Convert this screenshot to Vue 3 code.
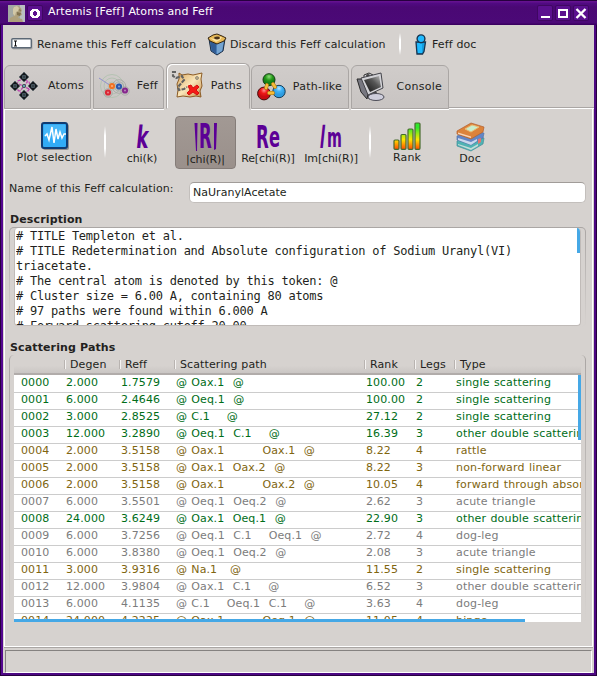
<script setup>
const columns = ['', 'Degen', 'Reff', 'Scattering path', 'Rank', 'Legs', 'Type']

const rows = [
  ['strong', '0000', '2.000', '1.7579', '@ Oax.1  @', '100.00', '2', 'single scattering'],
  ['strong', '0001', '6.000', '2.4646', '@ Oeq.1  @', '100.00', '2', 'single scattering'],
  ['strong', '0002', '3.000', '2.8525', '@ C.1    @', '27.12', '2', 'single scattering'],
  ['strong', '0003', '12.000', '3.2890', '@ Oeq.1  C.1    @', '16.39', '3', 'other double scattering'],
  ['medium', '0004', '2.000', '3.5158', '@ Oax.1         Oax.1  @', '8.22', '4', 'rattle'],
  ['medium', '0005', '2.000', '3.5158', '@ Oax.1  Oax.2  @', '8.22', '3', 'non-forward linear'],
  ['medium', '0006', '2.000', '3.5158', '@ Oax.1         Oax.2  @', '10.05', '4', 'forward through absorber'],
  ['weak', '0007', '6.000', '3.5501', '@ Oeq.1  Oeq.2  @', '2.62', '3', 'acute triangle'],
  ['strong', '0008', '24.000', '3.6249', '@ Oax.1  Oeq.1  @', '22.90', '3', 'other double scattering'],
  ['weak', '0009', '6.000', '3.7256', '@ Oeq.1  C.1    Oeq.1  @', '2.72', '4', 'dog-leg'],
  ['weak', '0010', '6.000', '3.8380', '@ Oeq.1  Oeq.2  @', '2.08', '3', 'acute triangle'],
  ['medium', '0011', '3.000', '3.9316', '@ Na.1   @', '11.55', '2', 'single scattering'],
  ['weak', '0012', '12.000', '3.9804', '@ Oax.1  C.1    @', '6.52', '3', 'other double scattering'],
  ['weak', '0013', '6.000', '4.1135', '@ C.1    Oeq.1  C.1    @', '3.63', '4', 'dog-leg'],
  ['medium', '0014', '24.000', '4.2225', '@ Oax.1         Oeq.1  @', '11.05', '4', 'hinge'],
]

const description = `# TITLE Templeton et al.
# TITLE Redetermination and Absolute configuration of Sodium Uranyl(VI)
triacetate.
# The central atom is denoted by this token: @
# Cluster size = 6.00 A, containing 80 atoms
# 97 paths were found within 6.000 A
# Forward scattering cutoff 20.00`
</script>

<template>
  <div class="window">
    <header class="titlebar">
      <svg class="portrait" width="17" height="17" viewBox="0 0 17 17">
        <rect width="17" height="17" fill="#a3a8a3" />
        <rect x="12" width="5" height="17" fill="#b9bfc1" />
        <path d="M6 2l4-1 3 2 1 3-1 1 1 3-3 1-1 2 4 1 1 3H1l1-4 4-2-1-3V4z" fill="#aea07c" />
        <path d="M6 2l3-1 2 2-1 3-2 1-1 4-2-2V4z" fill="#d2c8a7" />
        <path d="M9 7l4 1-1 3-3-1zM11 4l2 1-1 2z" fill="#817250" />
      </svg>
      <span class="wbtn menu">
        <svg width="14" height="14" viewBox="0 0 14 14"><path d="M4 3h6v1h1v1h1v5h-1v1h-1v1H4v-1H3v-1H2V5h1V4h1zM5 6v3h1v1h2V9h1V6H8V5H6v1z" fill="#fff" fill-rule="evenodd" /></svg>
      </span>
      <span class="title">Artemis [Feff] Atoms and Feff</span>
      <div class="controls">
        <span class="wbtn"><svg width="14" height="14" viewBox="0 0 14 14"><path d="M3 10h9v2H3z" fill="#fff" /></svg></span>
        <span class="wbtn"><svg width="14" height="14" viewBox="0 0 14 14"><path d="M2 3h10v9H2zM4 5v5h6V5z" fill="#fff" fill-rule="evenodd" /></svg></span>
        <span class="wbtn"><svg width="14" height="14" viewBox="0 0 14 14"><path d="M2.5 3l9 9M11.500 3l-9 9" stroke="#fff" stroke-width="2.4" /></svg></span>
      </div>
    </header>

    <nav class="toolbar">
      <span class="tool rename">
        <svg width="22" height="12" viewBox="0 0 22 12">
          <rect x="1.5" y="1.5" width="20" height="10" rx="1" fill="#aaa9a8" />
          <rect x=".8" y=".8" width="19.5" height="9" rx="1" fill="#fff" stroke="#5c6875" stroke-width="1.4" />
          <path d="M3 3h3M4.5 3v5M3 8h3" stroke="#111" />
        </svg>
        <span>Rename this Feff calculation</span>
      </span>
      <span class="tool discard">
        <svg width="20" height="22" viewBox="0 0 20 22">
          <path d="M2 6l8 4 8-4-2 12-6 4-6-4z" fill="#497db7" stroke="#1a2c43" />
          <path d="M3 8l6 3v10l-4-3z" fill="#315c94" />
          <path d="M10 11l7-4-2 11-5 3z" fill="#75a5d2" />
          <path d="M1 5l5-3 4-1 5 2 4 2-2 3-7 3-7-3z" fill="#e7b957" stroke="#35240f" />
          <path d="M3 5l4 1 1-3 3 1 4 0-2 3-4 2z" fill="#ffe4a1" />
          <ellipse cx="10" cy="5" rx="3" ry="1.4" fill="#493218" />
        </svg>
        <span>Discard this Feff calculation</span>
      </span>
      <i class="divider short"></i>
      <span class="tool doc">
        <svg width="12" height="21" viewBox="0 0 12 21">
          <path d="M1 8h9.500L9 17.5 7.500 20H2z" fill="#149ede" stroke="#173550" stroke-width="1.3" />
          <path d="M2 9h5v10H3z" fill="#20baff" />
          <circle cx="6" cy="4.8" r="3.9" fill="#20baff" stroke="#173550" stroke-width="1.4" />
        </svg>
        <span>Feff doc</span>
      </span>
    </nav>

    <div class="tabs">
      <div class="tab atoms">
        <svg width="28" height="30" viewBox="0 0 28 30">
          <g fill="none" stroke="#bd48af" stroke-width="1.3"><path d="M8 10l5-2 6 3 2 5-4 5-6 1-5-5zM9 13l10 5M18 10l-8 10" stroke-dasharray="3 1" /></g>
          <path d="M14 1l5 5-5 5-5-5zM5 10l5 5-5 5-5-5zM23 10l5 5-5 5-5-5zM14 19l5 5-5 5-5-5z" fill="#161b20" stroke="#59656d" stroke-width=".7" stroke-dasharray="2 1" />
          <g fill="#7894a5"><circle cx="14" cy="6" r="2" /><circle cx="5" cy="15" r="2" /><circle cx="23" cy="15" r="2" /><circle cx="14" cy="24" r="2" /></g>
          <path d="M11 6h6M2 15h6M20 15h6M11 24h6M14 3v6M5 12v6M23 12v6M14 21v6" stroke="#111" stroke-width=".8" />
          <circle cx="14" cy="15" r="2" fill="#37434b" /><circle cx="14" cy="15" r=".9" fill="#78cde1" />
        </svg>
        <span>Atoms</span>
      </div>
      <div class="tab feff">
        <svg width="30" height="26" viewBox="0 0 30 26">
          <g fill="none" stroke="#adc0ac" stroke-width=".8"><circle cx="13" cy="13" r="4" /><circle cx="13" cy="13" r="8" /><circle cx="13" cy="13" r="11.5" /></g>
          <g fill="none" stroke="#969b96" stroke-width=".6"><circle cx="20" cy="13.5" r="4.6" /><circle cx="20" cy="13.5" r="6.8" /><circle cx="26" cy="18" r="4.2" /><circle cx="9" cy="20" r="4.2" /></g>
          <path d="M0 5l12 8" stroke="#9091cd" />
          <circle cx="13" cy="13" r="3.1" fill="#f07222" /><circle cx="20" cy="13.5" r="3.1" fill="#2957ae" /><circle cx="9" cy="19.5" r="3.1" fill="#da2835" /><circle cx="26" cy="17.5" r="3.1" fill="#86288d" />
          <g fill="#fff" opacity=".45"><circle cx="13" cy="13" r="1" /><circle cx="20" cy="13.5" r="1" /><circle cx="9" cy="19.5" r="1" /><circle cx="26" cy="17.5" r="1" /></g>
        </svg>
        <span>Feff</span>
      </div>
      <div class="tab paths active">
        <svg width="31" height="30" viewBox="0 0 31 30">
          <defs><linearGradient id="paper" x2="1" y2="1"><stop stop-color="#dba963" /><stop offset=".5" stop-color="#fae6b9" /><stop offset="1" stop-color="#c69150" /></linearGradient></defs>
          <path d="M7 3l3 2 6-1 5 1 9-2-1 6 1 7-2 5 1 6-5-1-6 1-7-1-6 1 1-7-1-6 2-5z" fill="url(#paper)" stroke="#8c5c26" />
          <path d="M4 2L1 2v4l3 2 6-2 2 4-6 7 1 3 5-1 3-2" fill="none" stroke="#626262" stroke-width="2.1" stroke-dasharray="4 1.2" />
          <path d="M16 16l3-1 2 3 4-3 2 2-3 3 3 3-2 2-4-3-4 3-2-2 3-3z" fill="#f51a16" stroke="#d51010" stroke-width="1" />
          <circle cx="25" cy="8" r="1.5" fill="#c5ae80" stroke="#777" stroke-width=".7" />
        </svg>
        <span>Paths</span>
      </div>
      <div class="tab pathlike">
        <svg width="29" height="28" viewBox="0 0 29 28">
          <defs>
            <radialGradient id="green" cy=".25"><stop stop-color="#8cdc78" /><stop offset=".6" stop-color="#269b19" /><stop offset="1" stop-color="#128016" /></radialGradient>
            <radialGradient id="red" cy=".25"><stop stop-color="#ff9291" /><stop offset=".5" stop-color="#f01718" /><stop offset="1" stop-color="#c80b10" /></radialGradient>
            <radialGradient id="blue" cy=".25"><stop stop-color="#b8e4ff" /><stop offset=".5" stop-color="#3fb4f8" /><stop offset="1" stop-color="#2e9ce0" /></radialGradient>
          </defs>
          <circle cx="12" cy="6.7" r="6" fill="url(#green)" stroke="#123b12" /><circle cx="7" cy="20.5" r="6.4" fill="url(#red)" stroke="#46100f" /><circle cx="22" cy="18.5" r="6.2" fill="url(#blue)" stroke="#193d56" />
          <path d="M10 12l-1 3M16 11l2 3M12 20h4" stroke="#9d6c0d" stroke-width="3.8" stroke-linecap="round" /><path d="M10 12l-1 3M16 11l2 3M12 20h4" stroke="#f5bb38" stroke-width="2.8" stroke-linecap="round" />
        </svg>
        <span>Path-like</span>
      </div>
      <div class="tab console">
        <svg width="29" height="30" viewBox="0 0 29 30">
          <defs><linearGradient id="screen" x1="0" y1="1" x2="1" y2="0"><stop stop-color="#111" /><stop offset=".6" stop-color="#555" /><stop offset="1" stop-color="#bbb" /></linearGradient></defs>
          <path d="M8 3l5-2 4 2-2 4-7 0z" fill="#d6d6dc" stroke="#333" /><circle cx="12" cy="4" r="2" fill="#444" />
          <path d="M12 22l8-2 1 4-8 3z" fill="#7c7d86" stroke="#333" />
          <ellipse cx="20" cy="25" rx="8" ry="3.5" fill="#cdcddb" stroke="#4d4d58" />
          <path d="M1 7l5 0 6 15-1 5-6-7z" fill="#777780" stroke="#292929" />
          <path d="M5 6l20-5 2 15-15 7z" fill="#d2d2d6" stroke="#44444a" />
          <path d="M8 8l15-4 2 11-11 5z" fill="url(#screen)" />
        </svg>
        <span>Console</span>
      </div>
      <div class="tab-rest"></div>
    </div>

    <main class="pane">
      <div class="actions">
        <div class="action plot">
          <svg width="28" height="28" viewBox="0 0 28 28">
            <rect x="2" y="2" width="26" height="26" rx="2" fill="#77716f" opacity=".7" /><rect x="1" y="1" width="25" height="25" rx="2" fill="#31abf5" stroke="#0f3c73" stroke-width="2" />
            <path d="M3 3h21v8L3 15z" fill="#5bc3fb" opacity=".5" />
            <path d="M4 14l2-2 2 6 3-13 2 16 2-14 2 10 2-7 2 6 2-4h2" fill="none" stroke="#fff" stroke-width="1.5" />
          </svg>
          <span>Plot selection</span>
        </div>
        <i class="divider first"></i>
        <div class="action low chik">
          <svg width="30" height="31" viewBox="0 0 30 31"><text class="ink" transform="translate(8.5 27) skewX(-6) scale(.58 1)" font-size="31">k</text></svg>
          <span>chi(k)</span>
        </div>
        <div class="action low selected">
          <svg width="30" height="31" viewBox="0 0 30 31"><path d="M3.500 2h3L6 30H5zM23 2h3l-1 26-2 1z" fill="#5c0096" /><text class="ink" transform="translate(8 27) scale(.5 1)" font-size="33">R</text></svg>
          <span>|chi(R)|</span>
        </div>
        <div class="action low rechi">
          <svg width="30" height="31" viewBox="0 0 30 31"><text class="ink" transform="translate(3 27) scale(.52 1)" font-size="32">R</text><text class="ink" transform="translate(16 26) scale(.58 1)" font-size="28">e</text></svg>
          <span>Re[chi(R)]</span>
        </div>
        <div class="action low imchi">
          <svg width="30" height="31" viewBox="0 0 30 31"><text class="ink" transform="translate(3 27) skewX(-6) scale(.42 1)" font-size="32">I</text><text class="ink" transform="translate(11 26) scale(.55 1)" font-size="26">m</text></svg>
          <span>Im[chi(R)]</span>
        </div>
        <i class="divider second"></i>
        <div class="action rank">
          <svg width="28" height="28" viewBox="0 0 28 28">
            <defs><linearGradient id="rankfill" gradientUnits="userSpaceOnUse" x1="0" y1="2" x2="0" y2="28"><stop offset=".15" stop-color="#31e82c" /><stop offset=".4" stop-color="#a6ea13" /><stop offset=".6" stop-color="#ffe500" /><stop offset="1" stop-color="#ff3d00" /></linearGradient></defs>
            <g fill="url(#rankfill)" stroke="#466b2e" stroke-width="1.2"><rect x="1" y="18" width="5" height="9.3" rx="1" /><rect x="8" y="12.5" width="5" height="14.8" rx="1" /><rect x="15" y="7" width="5" height="20.3" rx="1" /><rect x="22" y="1" width="5" height="26.3" rx="1" /></g>
          </svg>
          <span>Rank</span>
        </div>
        <div class="action books">
          <svg width="29" height="30" viewBox="0 0 29 30">
            <path d="M1 19l13-5 14 2-1 6-12 7L1 24z" fill="#4fb2b3" stroke="#438e98" stroke-width=".7" /><path d="M2 22l13 4 7-4v2l-7 4-13-5z" fill="#c4dcd8" />
            <path d="M1 14l13-5 14 2-1 5-12 7L1 18z" fill="#6386c6" stroke="#5474a7" stroke-width=".7" /><path d="M2 16l13 4 6-3v2l-6 4-13-5z" fill="#cbd8ec" />
            <path d="M1 9l14-8 13 4-1 5-12 7L1 12z" fill="#dc833b" stroke="#b35f2c" stroke-width=".7" /><path d="M2 10.500l13 4v1.500l-13-4z" fill="#f7d5b8" />
            <path d="M9 7l7-4 7 2-8 5z" fill="#c9edcd" stroke="#eabd76" />
            <path d="M22 17l3-1v4l-3 2z" fill="#e4756e" />
          </svg>
          <span>Doc</span>
        </div>
      </div>

      <div class="name-row">
        <label>Name of this Feff calculation:</label>
        <div class="field">NaUranylAcetate</div>
      </div>

      <h2 class="desc-heading">Description</h2>
      <section class="frame desc">
        <div class="textbox">
          <pre>{{ description }}</pre>
          <i class="vscroll"></i>
        </div>
      </section>

      <h2 class="path-heading">Scattering Paths</h2>
      <section class="frame list">
        <div class="table">
          <div class="grid head"><span v-for="c in columns" :key="c">{{ c }}</span></div>
          <div class="body">
            <div v-for="r in rows" :key="r[1]" class="grid row" :class="r[0]">
              <span v-for="(cell, i) in r.slice(1)" :key="i">{{ cell }}</span>
            </div>
            <i class="vscroll"></i>
            <i class="hscroll"></i>
          </div>
        </div>
      </section>
    </main>

    <footer class="status"></footer>
  </div>
</template>

<style>
body { margin: 0; overflow: hidden; }
</style>

<style scoped>
* { box-sizing: border-box; }
svg { display: block; flex: none; overflow: visible; }
.window { width: 597px; height: 676px; padding: 0 3px 3px; display: flex; flex-direction: column; background: #d6d2cf; color: #231f20; font: 11px/14px "DejaVu Sans", sans-serif; letter-spacing: .1px; white-space: nowrap; box-shadow: inset 1px 0 #26003f, inset -1px 0 #26003f, inset 0 -1px #26003f, inset 3px 0 #54078f, inset -3px 0 #4c0782, inset 0 -3px #4c0782; }
.titlebar { flex: none; height: 25px; margin: 0 -3px; padding: 5px 8px 0; display: flex; align-items: flex-start; background: linear-gradient(#26003f 0 1px, #64118f 1px 2px, #510a83 3px, #4a0874 7px, #4b0977 23px, #3b0061 24px); color: #fff; }
.title { margin: 0 0 0 5px; letter-spacing: .13px; }
.wbtn { width: 16px; height: 16px; border: 1px solid #3f0762; border-radius: 2px; background: #5b108f; display: block; }
.menu { margin-left: 2px; }
.controls { margin-left: auto; display: flex; gap: 2px; }
.toolbar { flex: none; height: 38px; padding: 0 8px; display: flex; align-items: center; }
.tool { display: flex; align-items: center; gap: 4px; letter-spacing: .13px; }
.tool span { padding-top: 1px; }
.rename { width: 196px; }
.discard { width: 189px; gap: 3px; }
.doc { margin-left: 14px; gap: 5px; }
.divider { flex: none; width: 2px; background: linear-gradient(transparent, #fff 30%, #fff 70%, transparent); }
.short { height: 22px; margin-left: 3px; }
.tabs { flex: none; height: 46px; padding-left: 1px; display: flex; align-items: flex-end; gap: 2px; }
.tab { height: 44px; border: 1px solid #aaa6a4; border-radius: 6px 6px 0 0; display: flex; align-items: center; background: linear-gradient(#d0ccca, #c8c4c2); box-shadow: 0 1px #fff; padding-bottom: 1px; }
.tab span { margin-left: auto; letter-spacing: .25px; }
.atoms { width: 87px; padding: 0 6px 2px 5px; }
.feff { width: 71px; padding: 0 5px 2px 5px; }
.paths { width: 84px; padding: 0 7px 3px 5px; }
.pathlike { width: 98px; padding: 0 6px 1px 5px; margin-left: -1px; }
.console { width: 98px; padding: 0 6px 1px 4px; }
.tab.active { height: 46px; background: #d6d2cf; border-bottom-color: #d6d2cf; box-shadow: inset 1px 1px #fff; }
.tab.active span { padding-top: 2px; }
.tab-rest { flex: 1; height: 2px; margin-left: -2px; border-top: 1px solid #aaa6a4; background: #fff; }
.pane { flex: none; height: 538px; margin: 0 1px; border: solid #fff; border-width: 0 1px 1px; padding: 7px 6px 0 4px; box-shadow: 0 1px #aaa6a4; }
.actions { height: 53px; display: flex; align-items: flex-start; }
.action { height: 53px; display: flex; flex-direction: column; align-items: center; padding-top: 6px; letter-spacing: .15px; }
.action span { margin-top: auto; line-height: 14px; padding-bottom: 4px; }
.low { padding-top: 5px; letter-spacing: -.12px; }
.low span { padding-bottom: 3px; }
.plot { width: 91px; }
.divider.first, .divider.second { height: 32px; margin-top: 10px; }
.first { margin-left: 4px; }
.chik { width: 62px; margin-left: 5px; }
.selected { width: 61px; margin-left: 2px; background: linear-gradient(#a29994, #9a908b); border: 1px solid #857d79; border-radius: 4px; padding-top: 4px; }
.selected span { padding-bottom: 1px; }
.rechi { width: 60px; margin-left: 2px; }
.imchi { width: 64px; margin-left: 1px; }
.second { margin-left: 6px; }
.rank { width: 62px; margin-left: 5px; }
.books { width: 62px; margin-left: 1px; }
.ink { fill: #5c0096; font-family: "DejaVu Sans", sans-serif; font-weight: bold; letter-spacing: 0; }
.name-row { height: 44px; padding-top: 13px; display: flex; justify-content: space-between; }
label { letter-spacing: .13px; }
.field { width: 397px; height: 21px; border: 1px solid #c3bfbc; border-top: 1px solid #a19c99; border-radius: 5px; background: #fff; padding: 2px 3px; line-height: 15px; letter-spacing: .03px; }
h2 { margin: 0; font-size: 11px; line-height: 14px; font-weight: bold; letter-spacing: .13px; }
.desc-heading { height: 14px; margin-left: 1px; }
.frame { border: 1px solid transparent; border-radius: 5px; background: linear-gradient(#d6d2cf, #d6d2cf) padding-box, linear-gradient(#aaa6a4, #d6d2cf) border-box; }
.desc { height: 100px; padding-left: 4px; padding-right: 4px; }
.textbox { height: 98px; border: 1px solid #c0bbb8; border-radius: 4px; border-top: 0; background: #fff; overflow: hidden; position: relative; }
pre { height: 96px; overflow: hidden; margin: 1px 0 0 1px; font: 12px/15px "DejaVu Sans Mono", monospace; letter-spacing: -.24px; }
.vscroll { position: absolute; right: 0; top: 0; width: 3px; height: 25px; background: #45a8e6; }
.path-heading { margin: 14px 0 0 1px; height: 14px; }
.list { height: 267px; padding: 0 4px; border-top: 0; }
.table { height: 267px; width: 567px; background: #d6d2cf; }
.grid { display: grid; grid-template-columns: 45px 55px 55px 190px 50px 40px 125px; padding-left: 7px; }
.head { height: 20px; padding-left: 5px; border-bottom: 2px solid #b1acaa; background: linear-gradient(#d6d2cf 60%, #cac6c4); line-height: 19px; }
.head span { padding-left: 6px; background: linear-gradient(90deg, #b8b3b0 1px, #f5f3f2 1px) 0 5px / 2px 9px no-repeat; }
.head span:first-child { background: none; }
.body { height: 247px; position: relative; overflow: hidden; background: #fff; }
.row { height: 17px; line-height: 13px; border-bottom: 1px solid #ccc; white-space: pre; word-spacing: .65px; }
.row:first-child { height: 18px; padding-top: 1px; }
.row span:last-child { letter-spacing: .17px; }
.strong { color: #006d18; }
.medium { color: #806510; }
.weak { color: #7c7c7c; }
.body .vscroll { height: 65px; }
.hscroll { position: absolute; left: 0; bottom: 0; width: 511px; height: 3px; background: #45a8e6; }
.status { height: 23px; margin: 3px 2px 0; border: 1px solid #fff; border-top-color: #858280; border-left-color: #858280; }
</style>
